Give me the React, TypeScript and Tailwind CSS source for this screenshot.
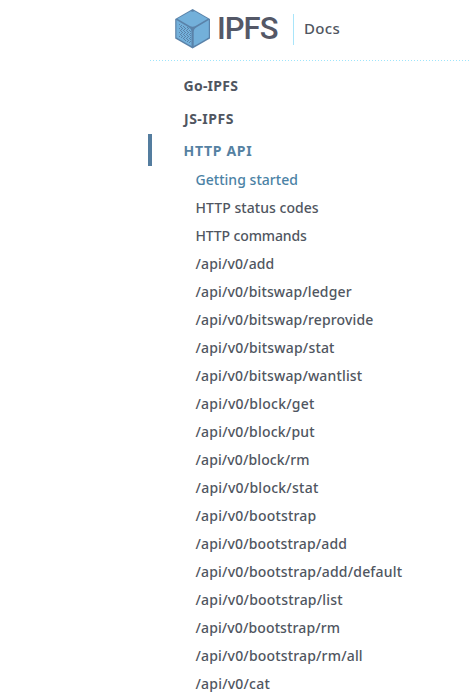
type Item = { label: string; className: string };

const commands: Item[] = [
  { label: 'Getting started', className: 'tracking-[0.03px] text-[#4b82a5]' },
  { label: 'HTTP status codes', className: 'tracking-[0.05px]' },
  { label: 'HTTP commands', className: 'tracking-[-0.13px]' },
  { label: '/api/v0/add', className: 'tracking-[0.14px]' },
  { label: '/api/v0/bitswap/ledger', className: 'tracking-[0.14px]' },
  { label: '/api/v0/bitswap/reprovide', className: 'tracking-[0.15px]' },
  { label: '/api/v0/bitswap/stat', className: 'tracking-[0.18px]' },
  { label: '/api/v0/bitswap/wantlist', className: 'tracking-[0.15px]' },
  { label: '/api/v0/block/get', className: 'tracking-[0.23px]' },
  { label: '/api/v0/block/put', className: 'tracking-[0.2px]' },
  { label: '/api/v0/block/rm', className: 'tracking-[0.12px]' },
  { label: '/api/v0/block/stat', className: 'tracking-[0.24px]' },
  { label: '/api/v0/bootstrap', className: 'tracking-[0.19px]' },
  { label: '/api/v0/bootstrap/add', className: 'tracking-[0.15px]' },
  { label: '/api/v0/bootstrap/add/default', className: 'tracking-[0.18px]' },
  { label: '/api/v0/bootstrap/list', className: 'tracking-[0.21px]' },
  { label: '/api/v0/bootstrap/rm', className: 'tracking-[0.12px]' },
  { label: '/api/v0/bootstrap/rm/all', className: 'tracking-[0.17px]' },
  { label: '/api/v0/cat', className: 'tracking-[0.2px]' },
];

function Cube() {
  return (
    <svg width="36" height="40" viewBox="0 0 36 40" className="block shrink-0" aria-hidden="true">
      <defs>
        <pattern id="grain" width="3" height="4" patternUnits="userSpaceOnUse">
          <path d="M0 0h1v1H0zM2 1h1v1H2zM0 2h1v1H0zM1 3h1v1H1z" fill="#5a82a9" />
        </pattern>
      </defs>
      <path d="M17.6 0 35 10v19.6L17.6 39.6 .2 29.6V10Z" fill="#5a82a9" />
      <path d="M15.6 2.2a4.5 4.5 0 0 0 4 0L32.8 9.8 20.4 17a5.5 5.5 0 0 1-5.6 0L2.4 9.8Z" fill="#73b0da" />
      <path d="M1.4 11.1 13.6 18.2a5.5 5.5 0 0 1 2.9 5V37.2a4 4 0 0 0-2.6-1.4L3.6 29.8A4 4 0 0 0 1.4 28.4Z" fill="#73b0da" />
      <path d="M33.8 11.1 21.6 18.2a5.5 5.5 0 0 0-2.9 5V37.2a4 4 0 0 1 2.6-1.4L31.6 29.8A4 4 0 0 1 33.8 28.4Z" fill="#73b0da" />
      <path d="M4 13.5 13.5 19a5 5 0 0 1 2.5 4.5v11L4 28Z" fill="url(#grain)" shapeRendering="crispEdges" />
    </svg>
  );
}

export default function App() {
  return (
    <div className="h-[698px] w-[470px] overflow-hidden bg-white pl-[148px] font-['Noto_Sans',sans-serif] text-[#505661]">
      <header className="flex h-[60px] items-start pl-[27px] pt-[9px]">
        <Cube />
        <span className="ml-[6px] mt-[3px] h-[34px] w-[62px] whitespace-nowrap font-['Roboto',sans-serif] text-[31px] leading-[34px] font-medium tracking-[-1px] text-[#545867]">IPFS</span>
        <span className="ml-[14px] mt-[5px] h-[31px] w-px bg-[#a9e5fa]" />
        <span className="ml-[10px] mt-[9px] text-[15px] leading-5 font-medium tracking-[0.3px]">Docs</span>
      </header>
      <div className="ml-[2px] h-px bg-[repeating-linear-gradient(90deg,#9ee5fb_0_1px,transparent_1px_3px)]" />
      <nav className="pt-2 text-[14px] font-bold">
        <div className="flex h-8 items-center pl-[35.5px]"><span className="tracking-[0.25px]">Go-IPFS</span></div>
        <div className="mt-px flex h-8 items-center pl-9"><span className="tracking-[0.5px]">JS-IPFS</span></div>
        <div className="flex h-8 items-center border-l-4 border-[#547d9f] pl-[31.5px] text-[#5581a2]"><span className="tracking-[0.7px]">HTTP API</span></div>
        <ul className="-mt-px pl-[47.5px] text-[14px] font-medium">
          {commands.map(({ label, className }) => (
            <li key={label} className="flex h-7 items-center whitespace-nowrap">
              <span className={className}>{label}</span>
            </li>
          ))}
        </ul>
      </nav>
    </div>
  );
}
